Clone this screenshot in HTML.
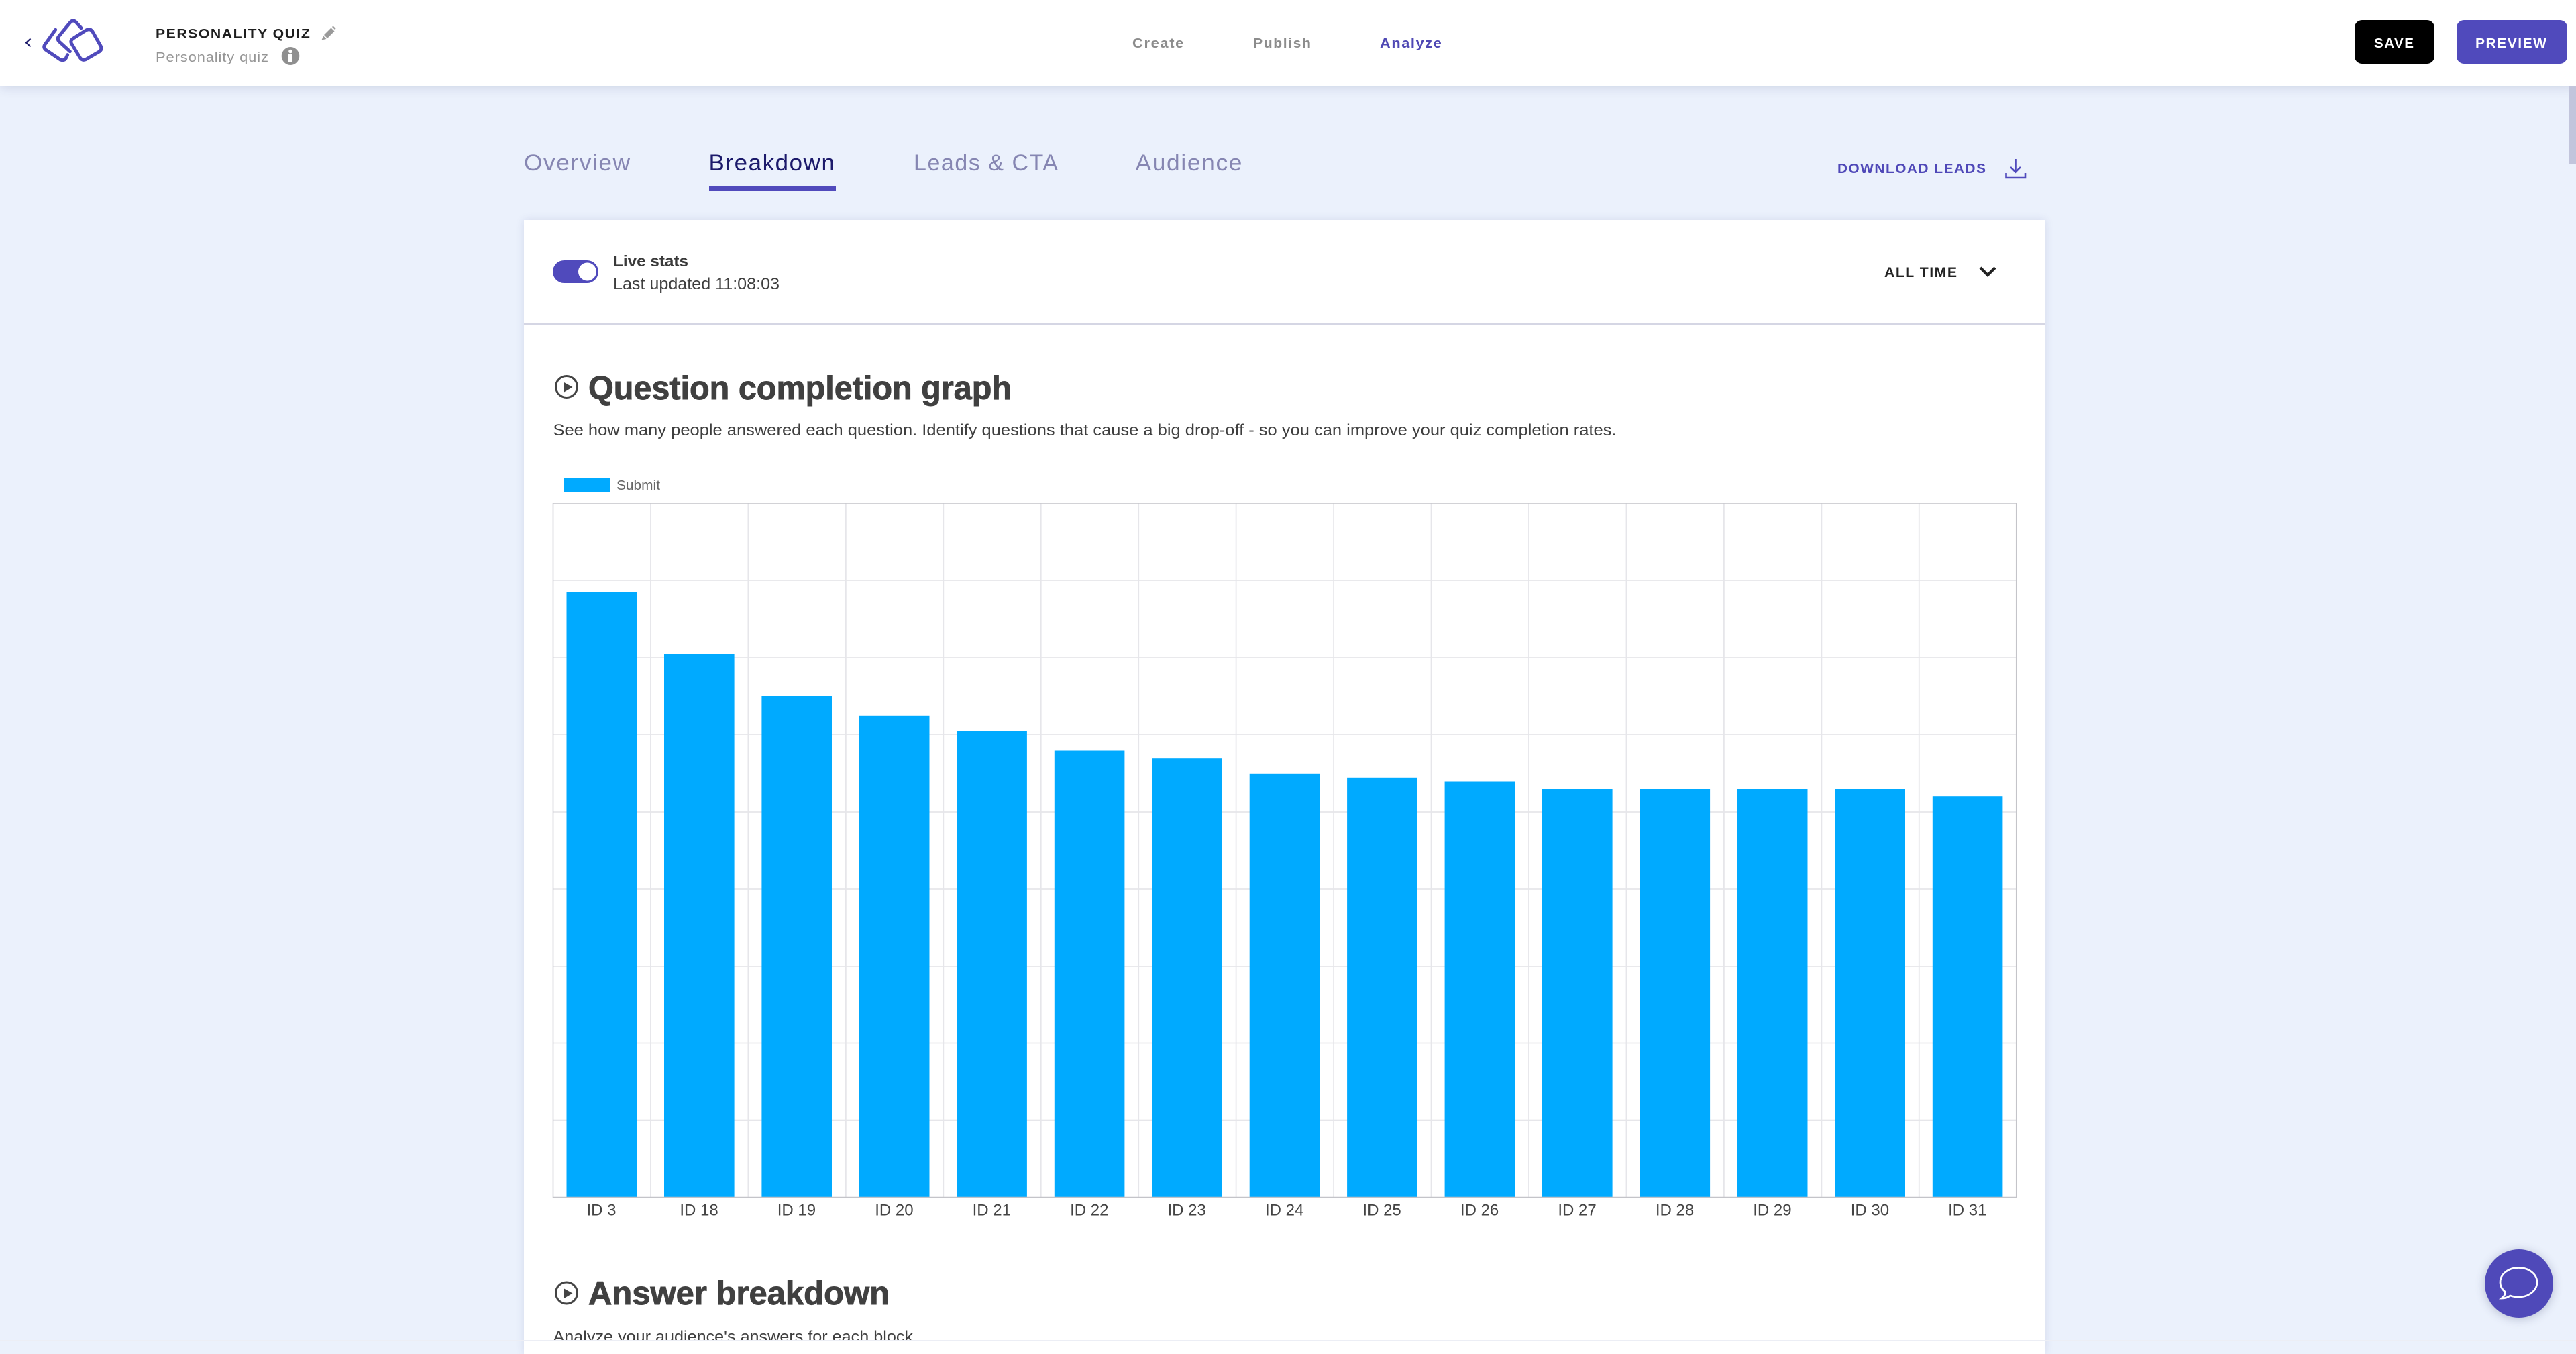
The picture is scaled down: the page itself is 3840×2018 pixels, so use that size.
<!DOCTYPE html>
<html lang="en">
<head>
<meta charset="utf-8">
<title>Personality Quiz - Breakdown</title>
<style>
html,body{margin:0;padding:0;width:3840px;height:1998px;overflow:hidden;background:#ebf1fc;font-family:"Liberation Sans",sans-serif}
.hdr{position:absolute;left:0;top:0;width:3840px;height:128px;background:#fff;box-shadow:0 2px 16px rgba(50,55,110,.16)}
.card{position:absolute;left:781px;top:328px;width:2268px;height:1690px;background:#fff;box-shadow:0 0 12px rgba(70,75,140,.14)}
.chat{position:absolute;left:3704px;top:1862px;width:102px;height:102px;border-radius:50%;background:#4f49b9;box-shadow:0 2px 14px rgba(60,70,110,.3)}
svg.top{position:absolute;left:0;top:0}
text{font-family:"Liberation Sans",sans-serif}
.b{font-weight:700}
</style>
</head>
<body>
<div class="hdr"></div>
<div class="card"></div>
<div class="chat"></div>
<svg class="top" width="3840" height="1998" viewBox="0 0 3840 1998" xmlns="http://www.w3.org/2000/svg">
  <!-- scrollbar -->
  <rect x="3830" y="128" width="10" height="116" fill="#c2c5dc"/>

  <!-- back chevron -->
  <path d="M45.500 57.500 L39 63.500 L45.500 69.500" fill="none" stroke="#1c1a6b" stroke-width="2.200"/>
  <!-- logo -->
  <g transform="translate(60 25) scale(.3333)" fill="none" stroke="#504abc" stroke-width="15" stroke-linecap="round" stroke-linejoin="round">
    <path d="M150 95 L205 60 Q222 50 233 65 L270 130 Q278 145 265 155 L205 190 Q188 198 178 183 L140 120 Q132 105 150 95Z"/>
    <path d="M183 50 L160 24 Q147 12 135 24 L85 85 Q73 97 84 110 L133 155"/>
    <path d="M68 58 L20 125 Q13 138 25 148 L90 192 Q108 198 115 185 L122 170"/>
  </g>

  <text x="232" y="56.500" font-size="19.600" class="b" fill="#1e1e1e" letter-spacing="1.400" textLength="231.400" lengthAdjust="spacingAndGlyphs">PERSONALITY QUIZ</text>
  <!-- pencil -->
  <path d="M483 52 L493.500 41.500 L498.500 46.500 L488 57Z" fill="#9a9a9a"/>
  <path d="M482 53.500 L486.500 58 L479.500 59.500Z" fill="#9a9a9a"/>
  <path d="M495 40 L496.500 38.500 L500.500 42.500 L499.500 44.500Z" fill="#9a9a9a"/>
  <text x="232" y="92" font-size="20" fill="#959595" letter-spacing=".8" textLength="168.800" lengthAdjust="spacingAndGlyphs">Personality quiz</text>
  <!-- info -->
  <ellipse cx="433" cy="83.500" rx="13.300" ry="13.500" fill="#8f8f8f"/>
  <circle cx="433" cy="76.500" r="2.800" fill="#fff"/>
  <rect x="430" y="81" width="6" height="11" fill="#fff"/>

  <text x="1688" y="71" font-size="20" class="b" fill="#8c8c8c" letter-spacing="1.500" textLength="78" lengthAdjust="spacingAndGlyphs">Create</text>
  <text x="1868" y="71" font-size="20" class="b" fill="#8c8c8c" letter-spacing="1.500" textLength="87.500" lengthAdjust="spacingAndGlyphs">Publish</text>
  <text x="2057" y="71" font-size="20" class="b" fill="#4f48b4" letter-spacing="1.500" textLength="93.500" lengthAdjust="spacingAndGlyphs">Analyze</text>

  <rect x="3510" y="30" width="119" height="65" rx="11" fill="#000"/>
  <text x="3539" y="71" font-size="20.500" class="b" fill="#fff" letter-spacing="1.500" textLength="60.500" lengthAdjust="spacingAndGlyphs">SAVE</text>
  <rect x="3662" y="30" width="165" height="65" rx="11" fill="#504abc"/>
  <text x="3690" y="71" font-size="20.500" class="b" fill="#fff" letter-spacing="1.500" textLength="107.500" lengthAdjust="spacingAndGlyphs">PREVIEW</text>

  <!-- tabs -->
  <text x="781" y="254" font-size="34.500" fill="#8686b2" letter-spacing="1.600" textLength="159.600" lengthAdjust="spacingAndGlyphs">Overview</text>
  <text x="1056.500" y="254" font-size="34.500" fill="#1c1a6b" letter-spacing="1.600" textLength="189" lengthAdjust="spacingAndGlyphs">Breakdown</text>
  <rect x="1057" y="277" width="189" height="7" fill="#504abc"/>
  <text x="1362" y="254" font-size="34.500" fill="#8686b2" letter-spacing="1.600" textLength="216.600" lengthAdjust="spacingAndGlyphs">Leads &amp; CTA</text>
  <text x="1692.500" y="254" font-size="34.500" fill="#8686b2" letter-spacing="1.600" textLength="160.600" lengthAdjust="spacingAndGlyphs">Audience</text>

  <text x="2739" y="258" font-size="20" class="b" fill="#4f48b8" letter-spacing="1.500" textLength="222.500" lengthAdjust="spacingAndGlyphs">DOWNLOAD LEADS</text>
  <path d="M3004.500 237 V256 M2997 249 L3004.500 256.500 L3012 249 M2990.500 258 V265 H3019 V258" fill="none" stroke="#504abc" stroke-width="2.600"/>

  <!-- card header -->
  <rect x="781" y="482" width="2268" height="2.500" fill="#d5d6e4"/>
  <rect x="824" y="388" width="68" height="34" rx="17" fill="#504abc"/>
  <circle cx="875.500" cy="405" r="13.500" fill="#fff"/>
  <text x="914" y="397" font-size="23" class="b" fill="#3a3a3a" textLength="112" lengthAdjust="spacingAndGlyphs">Live stats</text>
  <text x="914" y="431" font-size="24" fill="#3f3f3f" textLength="248" lengthAdjust="spacingAndGlyphs">Last updated 11:08:03</text>
  <text x="2809" y="413" font-size="21" class="b" fill="#222" letter-spacing="1.500" textLength="109.500" lengthAdjust="spacingAndGlyphs">ALL TIME</text>
  <path d="M2952 399 L2963 410 L2974 399" fill="none" stroke="#222" stroke-width="4.200"/>

  <!-- section 1 -->
  <circle cx="844.500" cy="576.500" r="16" fill="none" stroke="#444" stroke-width="3"/>
  <path d="M840 569.500 L853.500 577 L840 585Z" fill="#444"/>
  <text x="877" y="595" font-size="49" class="b" fill="#404040" stroke="#404040" stroke-width=".9" textLength="631" lengthAdjust="spacingAndGlyphs">Question completion graph</text>
  <text x="824.500" y="649" font-size="24.500" fill="#3f3f3f" textLength="1585" lengthAdjust="spacingAndGlyphs">See how many people answered each question. Identify questions that cause a big drop-off - so you can improve your quiz completion rates.</text>

  <!-- legend -->
  <rect x="841" y="713" width="68" height="20" fill="#00aaff"/>
  <text x="919" y="730" font-size="20.500" fill="#666" textLength="65" lengthAdjust="spacingAndGlyphs">Submit</text>

  <!-- grid -->
  <g stroke="#e6e6ea" stroke-width="1.800">
    <path d="M825 865H3006M825 980H3006M825 1095H3006M825 1210H3006M825 1325H3006M825 1440H3006M825 1554.500H3006M825 1669.500H3006" fill="none"/>
    <path d="M969.950 750V1784M1115.400 750V1784M1260.850 750V1784M1406.300 750V1784M1551.750 750V1784M1697.200 750V1784M1842.650 750V1784M1988.100 750V1784M2133.550 750V1784M2279 750V1784M2424.450 750V1784M2569.900 750V1784M2715.350 750V1784M2860.800 750V1784" fill="none"/>
  </g>
  <!-- bars -->
  <g fill="#00aaff">
    <rect x="844.500" y="882.500" width="104.600" height="902"/>
    <rect x="990" y="974.800" width="104.600" height="809.700"/>
    <rect x="1135.400" y="1037.800" width="104.600" height="746.700"/>
    <rect x="1280.900" y="1066.800" width="104.600" height="717.700"/>
    <rect x="1426.300" y="1089.800" width="104.600" height="694.700"/>
    <rect x="1571.800" y="1118.500" width="104.600" height="666"/>
    <rect x="1717.200" y="1130.200" width="104.600" height="654.300"/>
    <rect x="1862.700" y="1152.800" width="104.600" height="631.700"/>
    <rect x="2008.100" y="1158.800" width="104.600" height="625.700"/>
    <rect x="2153.600" y="1164.500" width="104.600" height="620"/>
    <rect x="2299" y="1176" width="104.600" height="608.500"/>
    <rect x="2444.500" y="1176" width="104.600" height="608.500"/>
    <rect x="2589.900" y="1176" width="104.600" height="608.500"/>
    <rect x="2735.400" y="1176" width="104.600" height="608.500"/>
    <rect x="2880.800" y="1187.200" width="104.600" height="597.300"/>
  </g>
  <!-- chart frame -->
  <rect x="824.500" y="750" width="2181.200" height="1034.500" fill="none" stroke="#c4c4c9" stroke-width="1.500"/>
  <!-- axis labels -->
  <g font-size="24" fill="#444" text-anchor="middle">
    <text x="896.500" y="1811.700">ID 3</text>
    <text x="1042" y="1811.700">ID 18</text>
    <text x="1187.400" y="1811.700">ID 19</text>
    <text x="1332.900" y="1811.700">ID 20</text>
    <text x="1478.300" y="1811.700">ID 21</text>
    <text x="1623.800" y="1811.700">ID 22</text>
    <text x="1769.200" y="1811.700">ID 23</text>
    <text x="1914.700" y="1811.700">ID 24</text>
    <text x="2060.100" y="1811.700">ID 25</text>
    <text x="2205.600" y="1811.700">ID 26</text>
    <text x="2351" y="1811.700">ID 27</text>
    <text x="2496.500" y="1811.700">ID 28</text>
    <text x="2641.900" y="1811.700">ID 29</text>
    <text x="2787.400" y="1811.700">ID 30</text>
    <text x="2932.800" y="1811.700">ID 31</text>
  </g>

  <!-- section 2 -->
  <circle cx="844.500" cy="1927" r="16" fill="none" stroke="#444" stroke-width="3"/>
  <path d="M840 1920 L853.500 1927.500 L840 1935.500Z" fill="#444"/>
  <text x="877" y="1944" font-size="49" class="b" fill="#404040" stroke="#404040" stroke-width=".9" textLength="449" lengthAdjust="spacingAndGlyphs">Answer breakdown</text>
  <text x="824.500" y="2000" font-size="24.500" fill="#3f3f3f" textLength="543.500" lengthAdjust="spacingAndGlyphs">Analyze your audience's answers for each block.</text>
  <rect x="0" y="1997" width="3840" height="1" fill="#eceef5"/>

  <!-- chat icon -->
  <path d="M3754.500 1889.500 C3770 1889.500 3782 1899 3782 1911 C3782 1923 3770 1933 3754.500 1933 C3750 1933 3746 1932.500 3742 1931 C3738 1934 3734 1935 3729 1935 C3733 1932 3735 1929 3734 1925 C3729 1921 3727 1916 3727 1911 C3727 1899 3739 1889.500 3754.500 1889.500Z" fill="none" stroke="#fff" stroke-width="2.700"/>
</svg>
</body>
</html>
